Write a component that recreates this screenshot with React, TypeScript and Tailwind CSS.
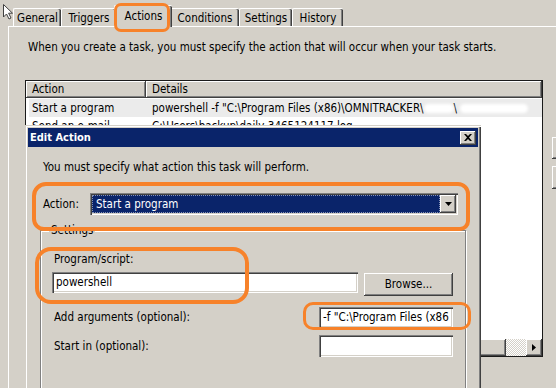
import React from "react";

const raised =
  "shadow-[inset_-1px_-1px_#404040,inset_1px_1px_#ffffff,inset_-2px_-2px_#808080]";
const sunken =
  "shadow-[inset_1px_1px_#808080,inset_2px_2px_#404040,inset_-1px_-1px_#ffffff,inset_-2px_-2px_#d4d0c8]";

function Tab({ w, children }: { w: string; children: React.ReactNode }) {
  return (
    <div
      className={`${w} h-[18px] flex items-center justify-center border-t border-l border-white rounded-tl-[2px] rounded-tr-[2px] shadow-[inset_-1px_0_#404040,inset_-2px_0_#808080] pt-[1px]`}
    >
      {children}
    </div>
  );
}

export default function App() {
  return (
    <div className="relative w-[556px] h-[388px] overflow-hidden bg-[#d4d0c8] text-[11.5px] leading-[13px] text-black font-['DejaVu_Sans_Condensed','DejaVu_Sans',sans-serif]">
      {/* Tabs */}
      <div className="flex items-end h-[26px] pl-[13px]">
        <Tab w="w-[48px]">General</Tab>
        <Tab w="w-[55px]">Triggers</Tab>
        <div className="relative z-10 -mx-[2px] mb-[-1px] w-[58px] h-[22px] bg-[#d4d0c8] flex items-start justify-center pt-[4px] border-t border-l border-white rounded-tl-[2px] rounded-tr-[2px] shadow-[inset_-1px_0_#404040,inset_-2px_0_#808080]">
          Actions
        </div>
        <Tab w="w-[69px]">Conditions</Tab>
        <Tab w="w-[53px]">Settings</Tab>
        <Tab w="w-[51px]">History</Tab>
      </div>

      {/* Tab panel */}
      <div className="ml-[8px] h-[400px] border-l border-t border-white pl-[16px] pt-[14px]">
        <div className="ml-[3px] whitespace-nowrap">
          When you create a task, you must specify the action that will occur when your task starts.
        </div>
        <div className="mt-[26px] flex gap-[9px]">
          {/* List view */}
          <div className="w-[518px] h-[277px] shrink-0 bg-white border border-[#1a1a1a] flex flex-col">
            <div className="flex h-[17px] shrink-0">
              <div className={`w-[120px] h-full bg-[#d4d0c8] ${raised} pl-[6px] flex items-center`}>Action</div>
              <div className={`flex-1 h-full bg-[#d4d0c8] ${raised} pl-[6px] flex items-center`}>Details</div>
            </div>
            <div className="flex-1 pt-[1px]">
              <div className="flex h-[18px] items-center bg-[#ebebeb] ml-[3px] whitespace-nowrap overflow-hidden">
                <div className="w-[117px] pl-[3px] shrink-0">Start a program</div>
                <div className="pl-[6px] flex items-center">
                  <span>powershell -f "C:\Program Files (x86)\OMNITRACKER\</span>
                  <span className="inline-block w-[30px] h-[9px] bg-white blur-[1.5px] rounded-full" />
                  <span>\</span>
                  <span className="inline-block w-[68px] h-[9px] bg-white blur-[1.5px] rounded-full ml-[3px]" />
                </div>
              </div>
              <div className="flex h-[18px] items-center ml-[3px] whitespace-nowrap overflow-hidden">
                <div className="w-[117px] pl-[3px] shrink-0">Send an e-mail</div>
                <div className="pl-[6px]">C:\Users\backup\daily-3465124117.log</div>
              </div>
            </div>
            {/* horizontal scrollbar */}
            <div className="flex h-[17px] shrink-0">
              <div className={`w-[16px] h-full bg-[#d4d0c8] ${raised} flex items-center justify-center`}>
                <svg width="4" height="7" viewBox="0 0 4 7"><path d="M4 0 L0 3.5 L4 7 Z" fill="#000" /></svg>
              </div>
              <div className={`w-[464px] h-full bg-[#d4d0c8] ${raised}`} />
              <div className="flex-1 h-full [background-image:repeating-conic-gradient(#ffffff_0%_25%,#d4d0c8_0%_50%)] [background-size:2px_2px]" />
              <div className={`w-[16px] h-full bg-[#d4d0c8] ${raised} flex items-center justify-center`}>
                <svg width="4" height="7" viewBox="0 0 4 7"><path d="M0 0 L4 3.5 L0 7 Z" fill="#000" /></svg>
              </div>
            </div>
          </div>
          {/* right buttons */}
          <div className="flex flex-col gap-[7px] pt-[57px]">
            <div className={`w-[60px] h-[22px] bg-[#d4d0c8] ${raised}`} />
            <div className={`w-[60px] h-[23px] bg-[#d4d0c8] ${raised}`} />
          </div>
        </div>
      </div>

      {/* Edit Action dialog */}
      <div className="absolute left-[25px] top-[125px] w-[456px] h-[290px] bg-[#d4d0c8] p-[3px] shadow-[inset_1px_1px_#d4d0c8,inset_2px_2px_#ffffff,inset_-1px_-1px_#404040,inset_-2px_-2px_#808080]">
        <div className="h-[19px] bg-[#0a246a] flex items-center justify-between pl-[2px] pr-[2px]">
          <span className="text-white font-bold text-[11px]">Edit Action</span>
          <div className={`w-[16px] h-[14px] bg-[#d4d0c8] ${raised} flex items-center justify-center`}>
            <svg width="8" height="7" viewBox="0 0 8 7">
              <path d="M0 0h2l2 2 2-2h2L5 3.5 8 7H6L4 5 2 7H0l3-3.5z" fill="#000" />
            </svg>
          </div>
        </div>
        <div className="pl-[15px] pt-[14px] whitespace-nowrap">
          You must specify what action this task will perform.
        </div>
        <div className="mt-[19px] flex items-center pl-[15px]">
          <div className="w-[47px]">Action:</div>
          <div className={`w-[368px] h-[22px] bg-white ${sunken} p-[2px] flex`}>
            <div className="flex-1 bg-[#0a246a] text-white flex items-center pl-[3px] border border-dotted border-[#ffffff80]">
              Start a program
            </div>
            <div className={`w-[16px] h-full bg-[#d4d0c8] ${raised} flex items-center justify-center`}>
              <svg width="7" height="4" viewBox="0 0 7 4"><path d="M0 0 H7 L3.5 4 Z" fill="#000" /></svg>
            </div>
          </div>
        </div>

        {/* Settings group */}
        <div className="relative mt-[15px] ml-[12px] w-[426px] h-[200px] border border-[#808080] shadow-[inset_1px_1px_#ffffff,1px_1px_#ffffff] pl-[13px] pt-[22px]">
          <span className="absolute left-[8px] -top-[7px] px-[2px] bg-[#d4d0c8]">Settings</span>
          <div>Program/script:</div>
          <div className="mt-[6px] -ml-[2px] flex items-start">
            <div className={`w-[306px] h-[21px] bg-white ${sunken} flex items-center pl-[4px]`}>powershell</div>
            <div className={`ml-[6px] mt-[1px] w-[89px] h-[23px] bg-[#d4d0c8] ${raised} flex items-center justify-center`}>
              Browse...
            </div>
          </div>
          <div className="mt-[11px] flex items-center">
            <div className="w-[265px]">Add arguments (optional):</div>
            <div className={`w-[134px] h-[21px] bg-white ${sunken} flex items-center pl-[4px] whitespace-nowrap overflow-hidden`}>
              -f "C:\Program Files (x86
            </div>
          </div>
          <div className="mt-[7px] flex items-center">
            <div className="w-[265px]">Start in (optional):</div>
            <div className={`w-[134px] h-[22px] bg-white ${sunken}`} />
          </div>
        </div>
      </div>

      {/* Orange annotation loops */}
      <div className="absolute left-[114px] top-[3px] w-[56px] h-[29px] border-[3px] border-[#f7822a] rounded-[7px] z-20" />
      <div className="absolute left-[32px] top-[182px] w-[438px] h-[49px] border-[4px] border-[#f7822a] rounded-tl-[14px] rounded-bl-[12px] rounded-tr-[12px] rounded-br-[10px] z-20" />
      <div className="absolute left-[35px] top-[247px] w-[214px] h-[57px] border-[4px] border-[#f7822a] rounded-[16px] z-20" />
      <div className="absolute left-[303px] top-[302px] w-[168px] h-[28px] border-[3px] border-[#f7822a] rounded-[10px] z-20" />

      {/* Mouse cursor */}
      <svg className="absolute left-[3px] top-[4px] z-30" width="12" height="16" viewBox="0 0 12 16">
        <path d="M0.5 0.5 V13 L3.5 10 L6 15 L8 14 L5.6 9.2 H9.5 Z" fill="#ffffff" stroke="#404040" strokeWidth="1" />
      </svg>
    </div>
  );
}
